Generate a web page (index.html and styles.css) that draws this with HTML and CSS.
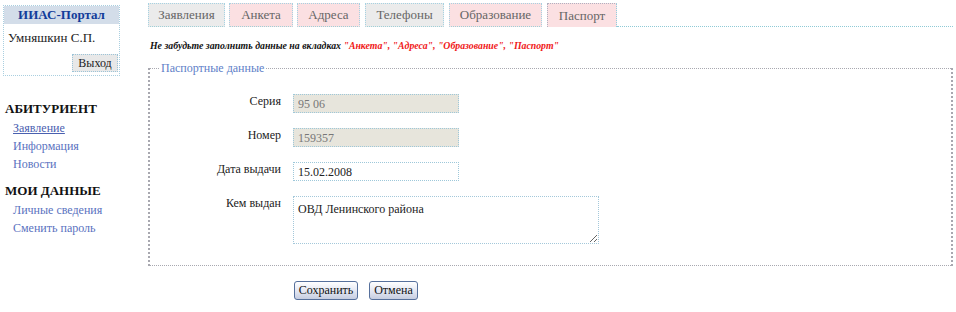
FILE: index.html
```html
<!DOCTYPE html>
<html lang="ru">
<head>
<meta charset="utf-8">
<title>ИИАС-Портал</title>
<link rel="stylesheet" href="styles.css">
</head>
<body>
<div class="page">
  <aside class="sidebar">
    <div class="login">
      <div class="login-head">ИИАС-Портал</div>
      <div class="login-name">Умняшкин С.П.</div>
      <div class="login-actions"><button class="btn-exit">Выход</button></div>
    </div>
    <div class="menu-title">АБИТУРИЕНТ</div>
    <ul class="menu">
      <li><a class="active" href="#">Заявление</a></li>
      <li><a href="#">Информация</a></li>
      <li><a href="#">Новости</a></li>
    </ul>
    <div class="menu-title second">МОИ ДАННЫЕ</div>
    <ul class="menu">
      <li><a href="#">Личные сведения</a></li>
      <li><a href="#">Сменить пароль</a></li>
    </ul>
  </aside>
  <main class="main">
    <nav class="tabs">
      <span class="tab gray w1">Заявления</span>
      <span class="tab pink w2">Анкета</span>
      <span class="tab pink w3">Адреса</span>
      <span class="tab gray w4">Телефоны</span>
      <span class="tab pink w5">Образование</span>
      <span class="tab pink current w6">Паспорт</span>
      <span class="tab-rest"></span>
    </nav>
    <p class="notice">Не забудьте заполнить данные на вкладках <span class="red">"Анкета", "Адреса", "Образование", "Паспорт"</span></p>
    <fieldset class="box">
      <legend>Паспортные данные</legend>
      <div class="form">
        <label>Серия</label>
        <input class="field ro" value="95 06" readonly>
        <label>Номер</label>
        <input class="field ro" value="159357" readonly>
        <label>Дата выдачи</label>
        <input class="field" value="15.02.2008">
        <label>Кем выдан</label>
        <textarea class="area">ОВД Ленинского района</textarea>
      </div>
    </fieldset>
    <div class="buttons">
      <button class="btn save">Сохранить</button>
      <button class="btn cancel">Отмена</button>
    </div>
  </main>
</div>
</body>
</html>
```

FILE: styles.css
```css
* { box-sizing: border-box; }
html, body { margin: 0; padding: 0; background: #fff; }
body {
  font-family: "Liberation Serif", "Times New Roman", serif;
  font-size: 12px;
  color: #111;
}
.page {
  display: flex;
  align-items: flex-start;
}
.sidebar {
  width: 148px;
  flex: none;
  padding: 5px 0 0 3px;
}
.login {
  width: 117px;
  height: 71px;
  border: 1px dotted #a9cfe0;
  display: flex;
  flex-direction: column;
}
.login-head {
  height: 18px;
  background: #d3dde9;
  color: #123c9a;
  font-weight: bold;
  font-size: 13px;
  text-align: center;
  line-height: 18px;
}
.login-name {
  font-size: 13px;
  padding: 6px 0 0 4px;
  line-height: 16px;
  color: #222;
}
.login-actions {
  display: flex;
  justify-content: flex-end;
  padding: 8px 1px 0 0;
}
.btn-exit {
  font-family: "Liberation Serif", "Times New Roman", serif;
  font-size: 12px;
  color: #222;
  width: 46px;
  height: 18px;
  padding: 0;
  background: #e8e8e8;
  border: 1px dotted #9cc4d8;
}
.menu-title {
  font-weight: bold;
  font-size: 13px;
  margin: 25px 0 0 2px;
  line-height: 16px;
  color: #111;
}
.menu-title.second { margin-top: 10px; }
.menu {
  list-style: none;
  margin: 2px 0 0 0;
  padding: 0 0 0 10px;
}
.menu li {
  line-height: 18px;
  font-size: 12px;
}
.menu a {
  color: #5a72c0;
  text-decoration: none;
}
.menu a.active {
  text-decoration: underline;
  color: #4a60b0;
}
.main {
  flex: 1;
  padding: 3px 3px 0 0;
}
.tabs {
  display: flex;
  align-items: stretch;
  height: 24px;
  gap: 4px;
}
.tab {
  display: flex;
  align-items: center;
  justify-content: center;
  font-family: "Liberation Serif", "Times New Roman", serif;
  font-size: 13px;
  color: #666;
  border: 1px dotted #a6d2e2;
  border-bottom-color: #9fd0d8;
}
.tab.gray { background: #ebebeb; }
.tab.pink { background: #fbe0e2; }
.tab.current { border-color: #b0b0c0; border-right-color: #90cfe0; border-bottom: none; }
.w1 { width: 77px; }
.w2 { width: 64px; }
.w3 { width: 63px; }
.w4 { width: 79px; margin-left: 1px; }
.w5 { width: 93px; margin-left: 1px; }
.w6 { width: 70px; margin-left: 1px; }
.tab-rest {
  flex: 1;
  border-bottom: 1px dotted #8fcad6;
  margin-left: -4px;
}
.notice {
  margin: 12px 0 0 2px;
  font-size: 9.8px;
  font-weight: bold;
  font-style: italic;
  line-height: 14px;
  color: #111;
}
.red { color: #f01818; }
.box {
  margin: 9px 0 0 0;
  width: 805px;
  height: 204px;
  padding: 20px 0 0 0;
  border: 2px dotted #a8a8b0;
  border-width: 1px 2px 1px 2px;
}
.box legend {
  font-family: "Liberation Serif", "Times New Roman", serif;
  color: #6080c8;
  font-size: 12px;
  padding: 0 1px;
  margin-left: 10px;
  line-height: 12px;
}
.form {
  display: grid;
  grid-template-columns: 131px 1fr;
  column-gap: 12px;
  row-gap: 15px;
  align-items: start;
}
.form label {
  font-family: "Liberation Serif", "Times New Roman", serif;
  text-align: right;
  font-size: 12px;
  color: #222;
  line-height: 14px;
  padding-top: 0;
}
.field {
  width: 166px;
  height: 19px;
  font-family: "Liberation Serif", "Times New Roman", serif;
  font-size: 12px;
  color: #222;
  padding: 1px 4px 0 4px;
  border: 1px dotted #9ec8da;
  background: #fff;
  outline: none;
}
.field.ro {
  background: #e7e5dc;
  color: #777;
}
.area {
  width: 306px;
  height: 48px;
  font-family: "Liberation Serif", "Times New Roman", serif;
  font-size: 12px;
  color: #222;
  padding: 5px 4px;
  border: 1px dotted #a4c8da;
  resize: both;
  outline: none;
}
.buttons {
  display: flex;
  gap: 11px;
  margin: 15px 0 0 146px;
}
.btn {
  font-family: "Liberation Serif", "Times New Roman", serif;
  font-size: 12px;
  color: #111;
  height: 19px;
  padding: 0;
  border: 1px solid #56709c;
  border-radius: 3px;
  background: linear-gradient(#ffffff, #dfe3f0 60%, #c6cde0);
}
.save { width: 64px; }
.cancel { width: 49px; }
```
